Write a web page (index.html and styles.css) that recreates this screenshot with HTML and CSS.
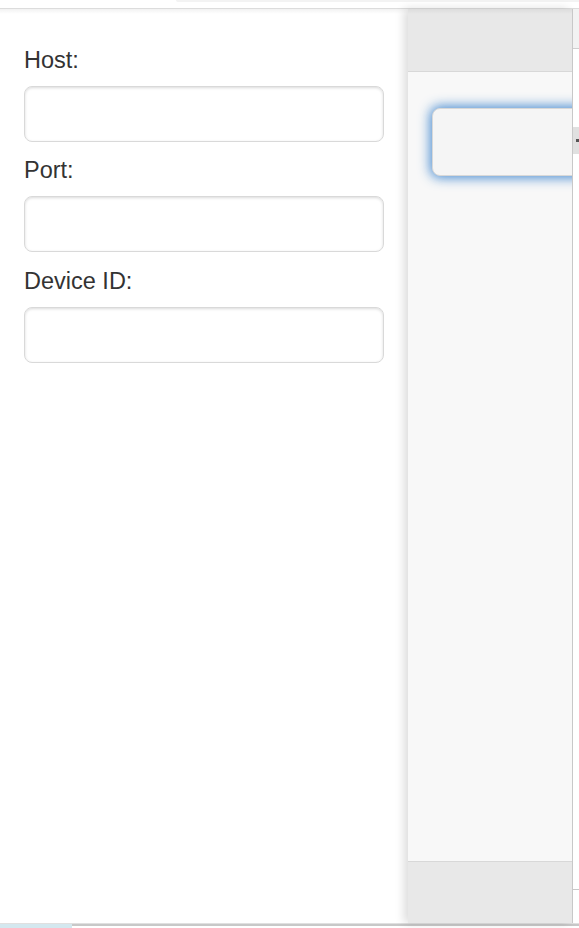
FILE: index.html
```html
<!DOCTYPE html>
<html>
<head>
<meta charset="utf-8">
<link rel="stylesheet" href="styles.css">
</head>
<body>
<div class="topbar"><div class="topbar-tab"></div></div>
<div class="main">
  <aside class="panel">
    <div class="field">
      <label class="label">Host:</label>
      <input class="input" type="text">
    </div>
    <div class="field">
      <label class="label">Port:</label>
      <input class="input" type="text">
    </div>
    <div class="field field-last">
      <label class="label">Device ID:</label>
      <input class="input" type="text">
    </div>
  </aside>
  <section class="page">
    <div class="header"></div>
    <div class="content">
      <div class="glow-input"></div>
    </div>
    <div class="footer"></div>
  </section>
  <div class="strip">
    <div class="strip-top"></div>
    <div class="strip-btn"><span class="dot"></span></div>
    <div class="strip-fill"></div>
    <div class="strip-line"></div>
  </div>
</div>
<div class="bottombar">
  <div class="bottom-blue"></div>
  <div class="bottom-rest"></div>
</div>
</body>
</html>
```

FILE: styles.css
```css
html, body {
  margin: 0;
  padding: 0;
  background: #fff;
  font-family: "Liberation Sans", Arial, sans-serif;
  overflow: hidden;
}
.topbar {
  height: 8px;
  border-bottom: 1px solid #dcdcdc;
  position: relative;
  background: #fff;
}
.topbar-tab {
  position: absolute;
  left: 176px;
  right: 0;
  top: 0;
  height: 2px;
  background: #f3f3f3;
  border-radius: 0 0 0 6px;
}
.main {
  display: flex;
  height: 914px;
  position: relative;
}
.main::before {
  content: "";
  position: absolute;
  left: 0; right: 0; top: 0;
  height: 5px;
  background: linear-gradient(rgba(0,0,0,0.05), rgba(0,0,0,0));
  z-index: 3;
  pointer-events: none;
}
.panel {
  width: 408px;
  flex: none;
  box-sizing: border-box;
  padding: 35px 24px 0 24px;
  background: #fff;
  display: flex;
  flex-direction: column;
  gap: 12px;
}
.field {
  display: flex;
  flex-direction: column;
  gap: 12px;
}
.field-last {
  margin-top: 1px;
}
.label {
  font-size: 23.5px;
  line-height: 28px;
  margin-top: 2px;
  color: #333;
}
.input {
  width: 360px;
  height: 56px;
  box-sizing: border-box;
  margin: 0;
  border: 1px solid #d9d9d9;
  border-radius: 8px;
  background: #fff;
  box-shadow: inset 0 1px 3px rgba(0,0,0,0.15);
  outline: none;
}
.page {
  width: 164px;
  flex: none;
  display: flex;
  flex-direction: column;
  position: relative;
  z-index: 2;
  box-shadow: -4px 0 9px rgba(0,0,0,0.14);
  overflow: hidden;
}
.header {
  height: 62px;
  background: #e8e8e8;
  border-bottom: 1px solid #d8d8d8;
  flex: none;
}
.content {
  flex: 1;
  background: #f8f8f8;
  padding: 36px 0 0 24px;
}
.glow-input {
  width: 170px;
  height: 68px;
  box-sizing: border-box;
  border: 1px solid #d8d8d8;
  border-radius: 8px;
  background: #f5f5f5;
  box-shadow: 0 0 12px 2px rgba(56,130,205,0.9);
}
.footer {
  height: 61px;
  background: #e8e8e8;
  border-top: 1px solid #d8d8d8;
  flex: none;
}
.strip {
  flex: 1;
  border-left: 1px solid #c8c8c8;
  display: flex;
  flex-direction: column;
  background: #fff;
  position: relative;
  z-index: 3;
}
.strip-top {
  height: 39px;
  background: #f2f2f2;
  border-bottom: 1px solid #cfcfcf;
  flex: none;
}
.strip-btn {
  margin-top: 78px;
  height: 27px;
  background: #e0e0e0;
  position: relative;
  flex: none;
}
.dot {
  position: absolute;
  left: 3px;
  top: 12px;
  width: 3px;
  height: 3px;
  background: #555;
}
.strip-fill {
  flex: 1;
}
.strip-line {
  height: 1px;
  background: #c8c8c8;
  margin-bottom: 33px;
}
.bottombar {
  height: 5px;
  display: flex;
  border-top: 1px solid #e0e0e0;
}
.bottom-blue {
  width: 72px;
  background: #d4e8ef;
}
.bottom-rest {
  flex: 1;
  border-top: 2px solid #c8c8c8;
  background: #fff;
}
```
